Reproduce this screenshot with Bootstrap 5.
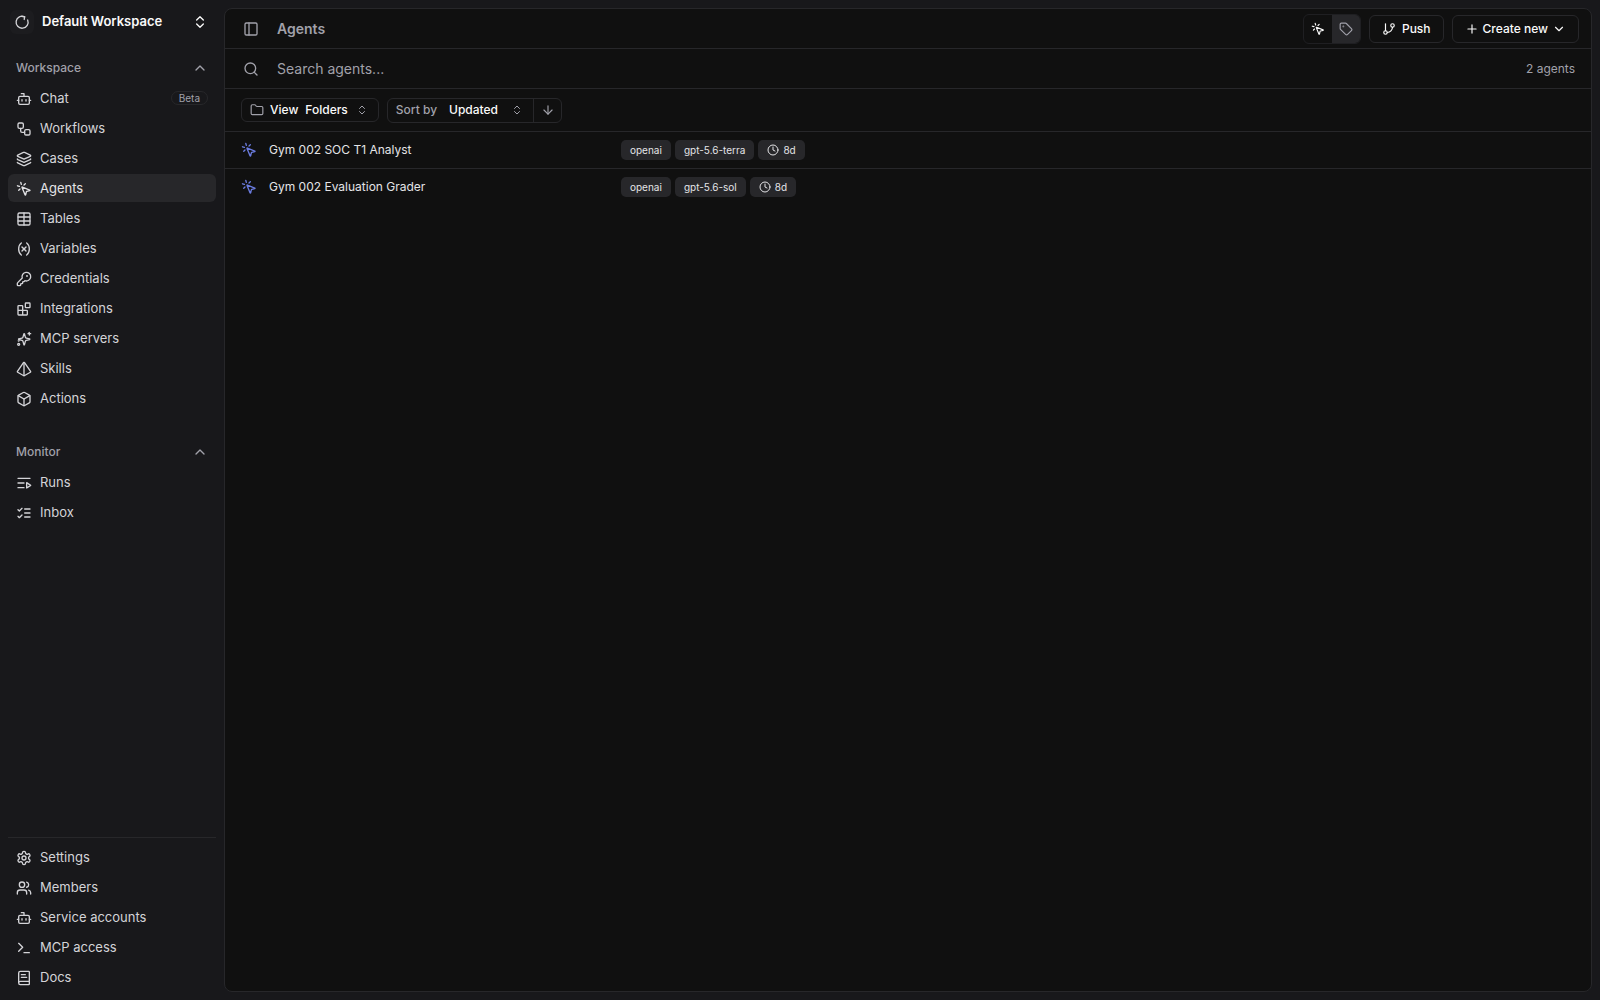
<!DOCTYPE html>
<html lang="en" data-bs-theme="dark">
<head>
    <meta charset="UTF-8">
    <meta name="viewport" content="width=device-width, initial-scale=1.0">
    <title>Agents</title>
    <link href="https://cdn.jsdelivr.net/npm/bootstrap@5.3.0/dist/css/bootstrap.min.css" rel="stylesheet">
    <style>
        html, body { height: 100%; }
        body {
            background-color: #18181b;
            color: #fafafa;
            font-family: Inter, "Liberation Sans", sans-serif;
            font-size: 13px;
            overflow: hidden;
        }
        .ico {
            width: 16px;
            height: 16px;
            flex: none;
            fill: none;
            stroke: currentColor;
            stroke-width: 2;
            stroke-linecap: round;
            stroke-linejoin: round;
        }
        .ico-sm { width: 12px; height: 12px; }
        .ico-xs { width: 14px; height: 14px; }

        /* sidebar */
        .sidebar { width: 224px; flex: none; padding: 0 8px 7px; }
        .ws-head { height: 43px; padding: 0 8px 0 2px; margin-bottom: 5px; font-weight: 600; }
        .ws-logo { width: 24px; height: 24px; border-radius: 6px; background-color: #1c1c1f; color: #d4d4d8; }
        .group-label { height: 30px; padding: 0 8px; margin: 5px 0 1px; font-size: 12px; font-weight: 500; color: #a1a1aa; }
        .group-label.next { margin-top: 23px; }
        .side-link {
            height: 28px;
            margin-bottom: 2px;
            padding: 2px 8px 0;
            gap: 8px;
            border-radius: 6px;
            color: #d4d4d8;
            text-decoration: none;
        }
        .side-link.active { background-color: #27272a; color: #e4e4e7; }
        .beta {
            font-size: 10px;
            line-height: 12px;
            padding: 0 7px;
            margin-bottom: 2px;
            border: 1px solid #27272a;
            border-radius: 999px;
            color: #a1a1aa;
        }
        .side-rule { border-top: 1px solid #27272a; margin: 0 0 5px; }

        /* main panel */
        .panel {
            margin: 8px 8px 8px 0;
            background-color: #101010;
            border: 1px solid #27272a;
            border-radius: 8px;
            min-width: 0;
        }
        .bar { border-bottom: 1px solid #27272a; padding-left: 16px; }
        .top-bar { height: 40px; padding-right: 12px; }
        .search-bar { height: 40px; padding-right: 16px; }
        .filter-bar { height: 43px; gap: 8px; }
        .title { font-size: 14px; font-weight: 600; color: #a1a1aa; margin-left: 18px; }
        .muted-ico { color: #a1a1aa; margin-left: 2px; }
        .search-bar input {
            background: transparent;
            border: 0;
            outline: 0;
            color: #fafafa;
            font-size: 14px;
            padding: 0;
            margin-left: 18px;
        }
        .search-bar input::placeholder { color: #a1a1aa; opacity: 1; }
        .count { font-size: 12px; color: #a1a1aa; }
        .tool-btn {
            height: 28px;
            padding: 0 12px;
            gap: 6px;
            font-size: 12px;
            font-weight: 500;
            color: #fafafa;
            background: transparent;
            border: 1px solid #27272a;
            border-radius: 6px;
        }
        .tool-btn.create { gap: 4px; }
        .tool-btn:hover { color: #fafafa; border-color: #27272a; }
        .toggle { height: 30px; border: 1px solid #1f1f22; border-radius: 6px; overflow: hidden; }
        .toggle span { width: 28px; }
        .toggle .on { background-color: #27272a; color: #a1a1aa; }
        .picker {
            height: 24px;
            border: 1px solid #27272a;
            border-radius: 6px;
            font-size: 12px;
            font-weight: 500;
            padding: 0 10px 0 8px;
        }
        .picker .view { margin: 0 7px 0 6px; }
        .picker .ico-sm { margin-left: 8px; }
        .sort-group { height: 25px; border: 1px solid #27272a; border-radius: 6px; font-size: 12px; font-weight: 500; }
        .sort-group > div { padding: 0 10px 0 8px; }
        .sort-group .ico-sm { margin-left: 13px; }
        .sort-group .arrow { border-left: 1px solid #27272a; width: 28px; padding: 0; }
        .dim { color: #a1a1aa; }

        /* agent rows */
        .agent-row { height: 37px; padding-left: 16px; font-size: 12px; border-bottom: 1px solid #27272a; }
        .agent-row:last-child { height: 36px; border-bottom: 0; }
        .agent-ico { color: #6b7ce0; }
        .agent-name { width: 352px; margin-left: 12px; color: #e4e4e7; }
        .chip {
            height: 20px;
            padding: 0 9px;
            gap: 4px;
            font-size: 10px;
            border-radius: 5px;
            background-color: #27272a;
            color: #e4e4e7;
        }
    </style>
</head>
<body>
    <svg class="d-none" xmlns="http://www.w3.org/2000/svg">
        <symbol id="i-logo" viewBox="0 0 24 24"><path d="M16 4.2A9 9 0 1 0 20.5 9"/><path d="M11 3.5c2 0 4 .3 5 .7l-.7 4"/></symbol>
        <symbol id="i-updown" viewBox="0 0 24 24"><path d="m7 15 5 5 5-5"/><path d="m7 9 5-5 5 5"/></symbol>
        <symbol id="i-up" viewBox="0 0 24 24"><path d="m18 15-6-6-6 6"/></symbol>
        <symbol id="i-down" viewBox="0 0 24 24"><path d="m6 9 6 6 6-6"/></symbol>
        <symbol id="i-bot" viewBox="0 0 24 24"><path d="M12 8V4H8"/><rect width="16" height="12" x="4" y="8" rx="2"/><path d="M2 14h2"/><path d="M20 14h2"/><path d="M15 13v2"/><path d="M9 13v2"/></symbol>
        <symbol id="i-flow" viewBox="0 0 24 24"><rect width="8" height="8" x="3" y="3" rx="2"/><path d="M7 11v4a2 2 0 0 0 2 2h4"/><rect width="8" height="8" x="13" y="13" rx="2"/></symbol>
        <symbol id="i-layers" viewBox="0 0 24 24"><path d="M12.83 2.18a2 2 0 0 0-1.66 0L2.6 6.08a1 1 0 0 0 0 1.83l8.58 3.91a2 2 0 0 0 1.66 0l8.58-3.9a1 1 0 0 0 0-1.83z"/><path d="M2 12a1 1 0 0 0 .58.91l8.6 3.91a2 2 0 0 0 1.65 0l8.58-3.9A1 1 0 0 0 22 12"/><path d="M2 17a1 1 0 0 0 .58.91l8.6 3.91a2 2 0 0 0 1.65 0l8.58-3.9A1 1 0 0 0 22 17"/></symbol>
        <symbol id="i-click" viewBox="0 0 24 24"><path d="M14 4.1 12 6"/><path d="m5.1 8-2.9-.8"/><path d="m6 12-1.9 2"/><path d="M7.2 2.2 8 5.1"/><path d="M9.037 9.69a.498.498 0 0 1 .653-.653l11 4.5a.5.5 0 0 1-.074.949l-4.349 1.041a1 1 0 0 0-.74.739l-1.04 4.35a.5.5 0 0 1-.95.074z"/></symbol>
        <symbol id="i-table" viewBox="0 0 24 24"><path d="M12 3v18"/><rect width="18" height="18" x="3" y="3" rx="2"/><path d="M3 9h18"/><path d="M3 15h18"/></symbol>
        <symbol id="i-var" viewBox="0 0 24 24"><path d="M8 21s-4-3-4-9 4-9 4-9"/><path d="M16 3s4 3 4 9-4 9-4 9"/><path d="m15 9-6 6"/><path d="m9 9 6 6"/></symbol>
        <symbol id="i-key" viewBox="0 0 24 24"><path d="M2.586 17.414A2 2 0 0 0 2 18.828V21a1 1 0 0 0 1 1h3a1 1 0 0 0 1-1v-1a1 1 0 0 1 1-1h1a1 1 0 0 0 1-1v-1a1 1 0 0 1 1-1h.172a2 2 0 0 0 1.414-.586l.814-.814a6.5 6.5 0 1 0-4-4z"/><circle cx="16.5" cy="7.5" r=".5"/></symbol>
        <symbol id="i-blocks" viewBox="0 0 24 24"><rect width="7" height="7" x="14" y="3" rx="1"/><path d="M10 21V8a1 1 0 0 0-1-1H4a1 1 0 0 0-1 1v12a1 1 0 0 0 1 1h12a1 1 0 0 0 1-1v-5a1 1 0 0 0-1-1H3"/></symbol>
        <symbol id="i-spark" viewBox="0 0 24 24"><path d="M10.5 15.5a2 2 0 0 0-1.4-1.4l-5-1.3a.5.5 0 0 1 0-.9l5-1.3a2 2 0 0 0 1.4-1.4l1.3-5a.5.5 0 0 1 .9 0l1.3 5a2 2 0 0 0 1.4 1.4l5 1.3a.5.5 0 0 1 0 .9l-5 1.3a2 2 0 0 0-1.4 1.4l-1.3 5a.5.5 0 0 1-.9 0z"/><path d="M20 2v4"/><path d="M22 4h-4"/><circle cx="4" cy="20" r="1.5"/><circle cx="4" cy="14.5" r=".5"/></symbol>
        <symbol id="i-pyramid" viewBox="0 0 24 24"><path d="M2.5 16.88a1 1 0 0 1-.32-1.43l9-13.02a1 1 0 0 1 1.64 0l9 13.01a1 1 0 0 1-.32 1.44l-8.51 4.86a2 2 0 0 1-1.98 0Z"/><path d="M12 2v20"/></symbol>
        <symbol id="i-box" viewBox="0 0 24 24"><path d="M21 8a2 2 0 0 0-1-1.73l-7-4a2 2 0 0 0-2 0l-7 4A2 2 0 0 0 3 8v8a2 2 0 0 0 1 1.73l7 4a2 2 0 0 0 2 0l7-4A2 2 0 0 0 21 16Z"/><path d="m3.3 7 8.7 5 8.7-5"/><path d="M12 22V12"/></symbol>
        <symbol id="i-runs" viewBox="0 0 24 24"><path d="M12 12H3"/><path d="M21 5H3"/><path d="M12 19H3"/><path d="m16 11.5 6 4-6 4Z"/></symbol>
        <symbol id="i-todo" viewBox="0 0 24 24"><path d="m3 17 2 2 4-4"/><path d="m3 7 2 2 4-4"/><path d="M13 6h8"/><path d="M13 12h8"/><path d="M13 18h8"/></symbol>
        <symbol id="i-gear" viewBox="0 0 24 24"><path d="M12.22 2h-.44a2 2 0 0 0-2 2v.18a2 2 0 0 1-1 1.73l-.43.25a2 2 0 0 1-2 0l-.15-.08a2 2 0 0 0-2.73.73l-.22.38a2 2 0 0 0 .73 2.73l.15.1a2 2 0 0 1 1 1.72v.51a2 2 0 0 1-1 1.74l-.15.09a2 2 0 0 0-.73 2.73l.22.38a2 2 0 0 0 2.73.73l.15-.08a2 2 0 0 1 2 0l.43.25a2 2 0 0 1 1 1.73V20a2 2 0 0 0 2 2h.44a2 2 0 0 0 2-2v-.18a2 2 0 0 1 1-1.73l.43-.25a2 2 0 0 1 2 0l.15.08a2 2 0 0 0 2.73-.73l.22-.39a2 2 0 0 0-.73-2.73l-.15-.08a2 2 0 0 1-1-1.74v-.5a2 2 0 0 1 1-1.74l.15-.09a2 2 0 0 0 .73-2.73l-.22-.38a2 2 0 0 0-2.73-.73l-.15.08a2 2 0 0 1-2 0l-.43-.25a2 2 0 0 1-1-1.73V4a2 2 0 0 0-2-2z"/><circle cx="12" cy="12" r="3"/></symbol>
        <symbol id="i-users" viewBox="0 0 24 24"><path d="M16 21v-2a4 4 0 0 0-4-4H6a4 4 0 0 0-4 4v2"/><circle cx="9" cy="7" r="4"/><path d="M22 21v-2a4 4 0 0 0-3-3.87"/><path d="M16 3.13a4 4 0 0 1 0 7.75"/></symbol>
        <symbol id="i-term" viewBox="0 0 24 24"><path d="m4 17 6-6-6-6"/><path d="M12 19h8"/></symbol>
        <symbol id="i-book" viewBox="0 0 24 24"><path d="M4 19.5v-15A2.5 2.5 0 0 1 6.5 2H19a1 1 0 0 1 1 1v18a1 1 0 0 1-1 1H6.5a1 1 0 0 1 0-5H20"/><path d="M8 11h8"/><path d="M8 7h6"/></symbol>
        <symbol id="i-panel" viewBox="0 0 24 24"><rect width="18" height="18" x="3" y="3" rx="2"/><path d="M9 3v18"/></symbol>
        <symbol id="i-search" viewBox="0 0 24 24"><path d="m21 21-4.34-4.34"/><circle cx="11" cy="11" r="8"/></symbol>
        <symbol id="i-folder" viewBox="0 0 24 24"><path d="M20 20a2 2 0 0 0 2-2V8a2 2 0 0 0-2-2h-7.9a2 2 0 0 1-1.69-.9L9.6 3.9A2 2 0 0 0 7.93 3H4a2 2 0 0 0-2 2v13a2 2 0 0 0 2 2Z"/></symbol>
        <symbol id="i-arrow" viewBox="0 0 24 24"><path d="M12 5v14"/><path d="m19 12-7 7-7-7"/></symbol>
        <symbol id="i-clock" viewBox="0 0 24 24"><circle cx="12" cy="12" r="10"/><path d="M12 6v6l4 2"/></symbol>
        <symbol id="i-tag" viewBox="0 0 24 24"><path d="M12.586 2.586A2 2 0 0 0 11.172 2H4a2 2 0 0 0-2 2v7.172a2 2 0 0 0 .586 1.414l8.704 8.704a2.426 2.426 0 0 0 3.42 0l6.58-6.58a2.426 2.426 0 0 0 0-3.42z"/><circle cx="7.5" cy="7.5" r=".5"/></symbol>
        <symbol id="i-branch" viewBox="0 0 24 24"><path d="M6 3v12"/><circle cx="18" cy="6" r="3"/><circle cx="6" cy="18" r="3"/><path d="M18 9a9 9 0 0 1-9 9"/></symbol>
        <symbol id="i-plus" viewBox="0 0 24 24"><path d="M5 12h14"/><path d="M12 5v14"/></symbol>
    </svg>

    <div class="d-flex vh-100">
        <!-- sidebar -->
        <aside class="sidebar d-flex flex-column">
            <div class="ws-head d-flex align-items-center">
                <span class="ws-logo d-flex align-items-center justify-content-center me-2"><svg class="ico"><use href="#i-logo"/></svg></span>
                <span class="flex-grow-1 text-truncate">Default Workspace</span>
                <svg class="ico"><use href="#i-updown"/></svg>
            </div>

            <div class="group-label d-flex align-items-center justify-content-between">Workspace <svg class="ico"><use href="#i-up"/></svg></div>
            <nav class="d-flex flex-column">
                <a class="side-link d-flex align-items-center" href="#"><svg class="ico"><use href="#i-bot"/></svg>Chat<span class="beta ms-auto">Beta</span></a>
                <a class="side-link d-flex align-items-center" href="#"><svg class="ico"><use href="#i-flow"/></svg>Workflows</a>
                <a class="side-link d-flex align-items-center" href="#"><svg class="ico"><use href="#i-layers"/></svg>Cases</a>
                <a class="side-link active d-flex align-items-center" href="#"><svg class="ico"><use href="#i-click"/></svg>Agents</a>
                <a class="side-link d-flex align-items-center" href="#"><svg class="ico"><use href="#i-table"/></svg>Tables</a>
                <a class="side-link d-flex align-items-center" href="#"><svg class="ico"><use href="#i-var"/></svg>Variables</a>
                <a class="side-link d-flex align-items-center" href="#"><svg class="ico"><use href="#i-key"/></svg>Credentials</a>
                <a class="side-link d-flex align-items-center" href="#"><svg class="ico"><use href="#i-blocks"/></svg>Integrations</a>
                <a class="side-link d-flex align-items-center" href="#"><svg class="ico"><use href="#i-spark"/></svg>MCP servers</a>
                <a class="side-link d-flex align-items-center" href="#"><svg class="ico"><use href="#i-pyramid"/></svg>Skills</a>
                <a class="side-link d-flex align-items-center" href="#"><svg class="ico"><use href="#i-box"/></svg>Actions</a>
            </nav>

            <div class="group-label next d-flex align-items-center justify-content-between">Monitor <svg class="ico"><use href="#i-up"/></svg></div>
            <nav class="d-flex flex-column">
                <a class="side-link d-flex align-items-center" href="#"><svg class="ico"><use href="#i-runs"/></svg>Runs</a>
                <a class="side-link d-flex align-items-center" href="#"><svg class="ico"><use href="#i-todo"/></svg>Inbox</a>
            </nav>

            <div class="mt-auto">
                <div class="side-rule"></div>
                <nav class="d-flex flex-column">
                    <a class="side-link d-flex align-items-center" href="#"><svg class="ico"><use href="#i-gear"/></svg>Settings</a>
                    <a class="side-link d-flex align-items-center" href="#"><svg class="ico"><use href="#i-users"/></svg>Members</a>
                    <a class="side-link d-flex align-items-center" href="#"><svg class="ico"><use href="#i-bot"/></svg>Service accounts</a>
                    <a class="side-link d-flex align-items-center" href="#"><svg class="ico"><use href="#i-term"/></svg>MCP access</a>
                    <a class="side-link d-flex align-items-center" href="#"><svg class="ico"><use href="#i-book"/></svg>Docs</a>
                </nav>
            </div>
        </aside>

        <!-- main panel -->
        <main class="panel flex-grow-1 d-flex flex-column">
            <div class="bar top-bar d-flex align-items-center">
                <svg class="ico muted-ico"><use href="#i-panel"/></svg>
                <span class="title flex-grow-1">Agents</span>
                <div class="toggle d-flex me-2">
                    <span class="d-flex align-items-center justify-content-center"><svg class="ico ico-xs"><use href="#i-click"/></svg></span>
                    <span class="on d-flex align-items-center justify-content-center"><svg class="ico ico-xs"><use href="#i-tag"/></svg></span>
                </div>
                <button type="button" class="btn tool-btn d-flex align-items-center me-2"><svg class="ico ico-xs"><use href="#i-branch"/></svg>Push</button>
                <button type="button" class="btn tool-btn create d-flex align-items-center"><svg class="ico ico-xs"><use href="#i-plus"/></svg>Create new<svg class="ico ico-xs"><use href="#i-down"/></svg></button>
            </div>

            <div class="bar search-bar d-flex align-items-center">
                <svg class="ico muted-ico"><use href="#i-search"/></svg>
                <input class="flex-grow-1" type="text" placeholder="Search agents...">
                <span class="count">2 agents</span>
            </div>

            <div class="bar filter-bar d-flex align-items-center">
                <div class="picker d-flex align-items-center">
                    <svg class="ico ico-xs dim"><use href="#i-folder"/></svg>
                    <span class="view">View</span><span>Folders</span>
                    <svg class="ico ico-sm dim"><use href="#i-updown"/></svg>
                </div>
                <div class="sort-group d-flex align-items-center">
                    <div class="d-flex align-items-center h-100">
                        <span class="dim me-2">Sort by</span><span class="ms-1">Updated</span>
                        <svg class="ico ico-sm dim"><use href="#i-updown"/></svg>
                    </div>
                    <div class="arrow d-flex align-items-center justify-content-center h-100"><svg class="ico ico-xs dim"><use href="#i-arrow"/></svg></div>
                </div>
            </div>

            <div class="agent-row d-flex align-items-center">
                <svg class="ico agent-ico"><use href="#i-click"/></svg>
                <span class="agent-name">Gym 002 SOC T1 Analyst</span>
                <div class="d-flex gap-1">
                    <span class="chip d-flex align-items-center">openai</span>
                    <span class="chip d-flex align-items-center">gpt-5.6-terra</span>
                    <span class="chip d-flex align-items-center"><svg class="ico ico-sm"><use href="#i-clock"/></svg>8d</span>
                </div>
            </div>
            <div class="agent-row d-flex align-items-center">
                <svg class="ico agent-ico"><use href="#i-click"/></svg>
                <span class="agent-name">Gym 002 Evaluation Grader</span>
                <div class="d-flex gap-1">
                    <span class="chip d-flex align-items-center">openai</span>
                    <span class="chip d-flex align-items-center">gpt-5.6-sol</span>
                    <span class="chip d-flex align-items-center"><svg class="ico ico-sm"><use href="#i-clock"/></svg>8d</span>
                </div>
            </div>
        </main>
    </div>
    <script src="https://cdn.jsdelivr.net/npm/bootstrap@5.3.0/dist/js/bootstrap.bundle.min.js"></script>
</body>
</html>
